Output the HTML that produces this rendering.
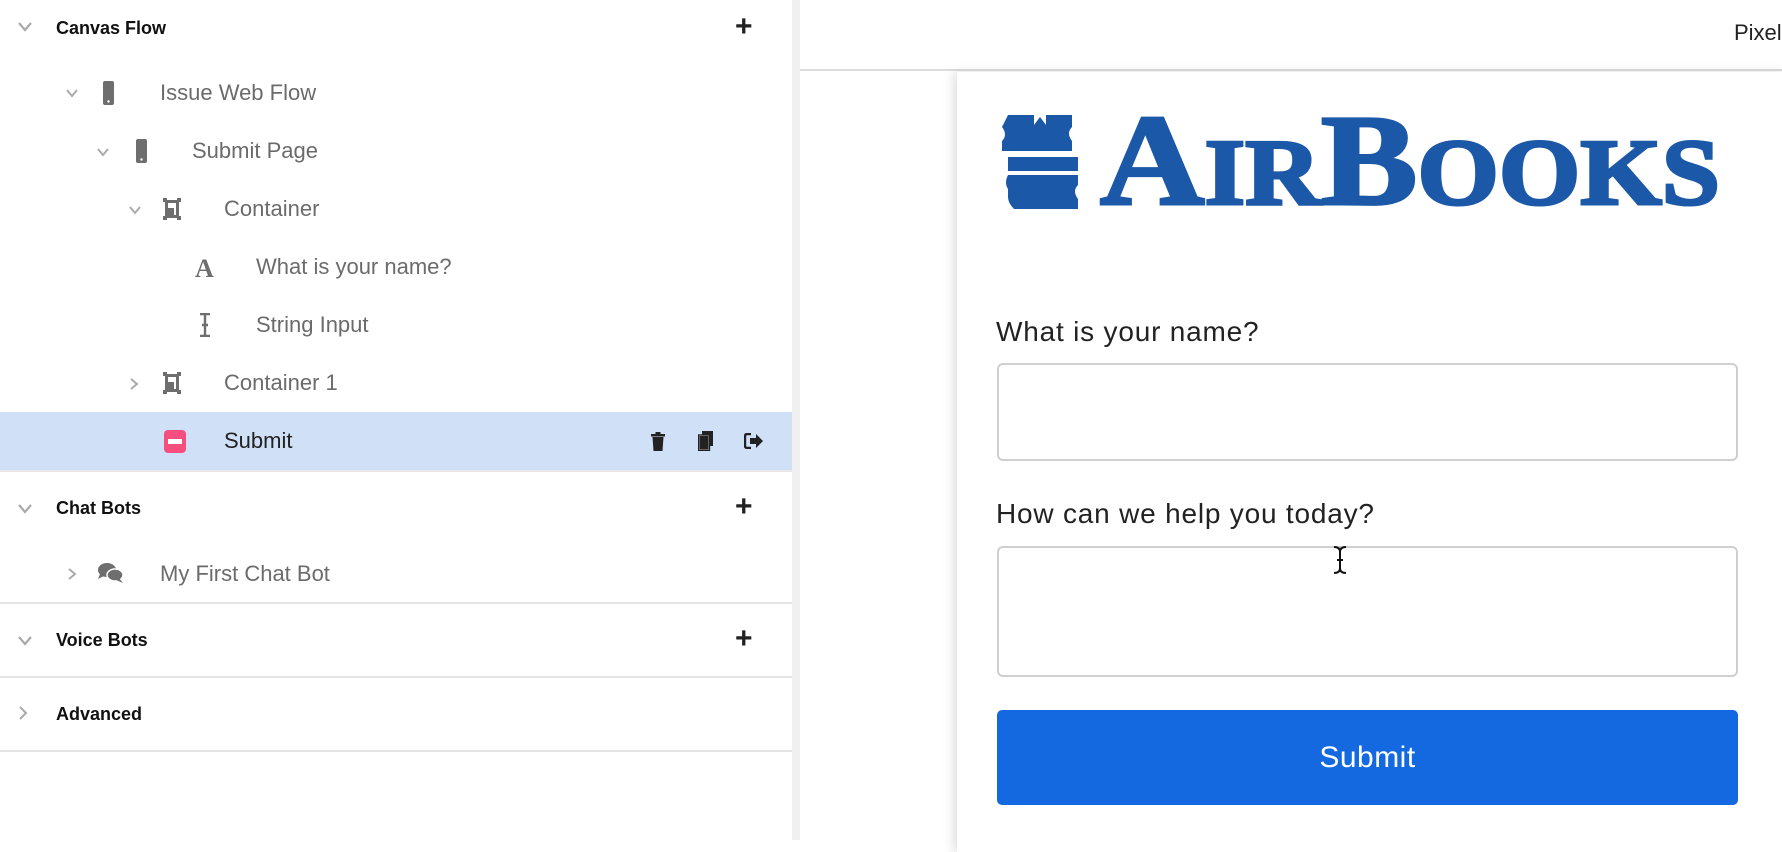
<!DOCTYPE html>
<html><head><meta charset="utf-8"><style>
*{box-sizing:border-box;margin:0;padding:0}
body{width:1782px;height:840px;overflow:hidden;background:#fff;font-family:"Liberation Sans",Arial,sans-serif;position:relative}
.side{position:absolute;left:0;top:0;width:792px;height:840px;background:#fff}
.div{position:absolute;left:792px;top:0;width:8px;height:840px;background:#f0f0f0}
.t{position:absolute;white-space:nowrap}
.h{font-size:18px;font-weight:bold;color:#111;left:56px}
.i{font-size:22px;color:#6b6b6b}
.plus{position:absolute;left:735px;font-size:30px;font-weight:bold;color:#222;line-height:1}
.line{position:absolute;left:0;width:792px;height:2px;background:#e4e4e4}
.right{position:absolute;left:800px;top:0;width:982px;height:840px;background:#fff}
.card{position:absolute;left:957px;top:72px;width:830px;height:780px;background:#fff;box-shadow:-4px 0 10px rgba(0,0,0,.12)}
.lab{position:absolute;left:996px;font-size:28px;color:#222;letter-spacing:.8px}
.inp{position:absolute;left:997px;width:741px;border:2px solid #cfcfcf;border-radius:6px;background:#fff}
</style></head><body>
<div class="side">
 <svg class="t" style="left:18px;top:22px" width="14" height="10"><path d="M1 1l6 7 6-7" stroke="#aaa" stroke-width="2.2" fill="none"/></svg>
 <div class="t h" style="top:18px">Canvas Flow</div>
 <div class="plus" style="top:12px">+</div>

 <svg class="t" style="left:66px;top:89px" width="12" height="9"><path d="M1 1l5 6 5-6" stroke="#aaa" stroke-width="2" fill="none"/></svg>
 <svg class="t" style="left:103px;top:81px" width="12" height="24"><rect x="0" y="0" width="11" height="24" rx="2" fill="#6e6e6e"/><circle cx="5.5" cy="20.5" r="1.2" fill="#fff"/></svg>
 <div class="t i" style="left:160px;top:80px">Issue Web Flow</div>

 <svg class="t" style="left:97px;top:148px" width="12" height="9"><path d="M1 1l5 6 5-6" stroke="#aaa" stroke-width="2" fill="none"/></svg>
 <svg class="t" style="left:136px;top:139px" width="12" height="24"><rect x="0" y="0" width="11" height="24" rx="2" fill="#6e6e6e"/><circle cx="5.5" cy="20.5" r="1.2" fill="#fff"/></svg>
 <div class="t i" style="left:192px;top:138px">Submit Page</div>

 <svg class="t" style="left:129px;top:206px" width="12" height="9"><path d="M1 1l5 6 5-6" stroke="#aaa" stroke-width="2" fill="none"/></svg>
 <svg class="t" style="left:163px;top:198px" width="18" height="22"><path d="M0 0h4v2h10v-2h4v4h-2v14h2v4h-4v-2h-10v2h-4v-4h2v-14h-2z" fill="#6e6e6e"/><rect x="5" y="5" width="8" height="12" fill="#fff"/><rect x="5" y="10" width="6" height="7" fill="#6e6e6e"/></svg>
 <div class="t i" style="left:224px;top:196px">Container</div>

 <div class="t" style="left:195px;top:254px;font-family:'Liberation Serif',serif;font-weight:bold;font-size:26px;color:#6e6e6e">A</div>
 <div class="t i" style="left:256px;top:254px">What is your name?</div>

 <svg class="t" style="left:199px;top:313px" width="12" height="24"><path d="M1 1h10M6 1v22M1 23h10M3 12h6" stroke="#6e6e6e" stroke-width="2.4" fill="none"/></svg>
 <div class="t i" style="left:256px;top:312px">String Input</div>

 <svg class="t" style="left:130px;top:378px" width="9" height="12"><path d="M1 1l6 5-6 5" stroke="#aaa" stroke-width="2" fill="none"/></svg>
 <svg class="t" style="left:163px;top:372px" width="18" height="22"><path d="M0 0h4v2h10v-2h4v4h-2v14h2v4h-4v-2h-10v2h-4v-4h2v-14h-2z" fill="#6e6e6e"/><rect x="5" y="5" width="8" height="12" fill="#fff"/><rect x="5" y="10" width="6" height="7" fill="#6e6e6e"/></svg>
 <div class="t i" style="left:224px;top:370px">Container 1</div>

 <div style="position:absolute;left:0;top:412px;width:792px;height:58px;background:#cfe0f7"></div>
 <div style="position:absolute;left:164px;top:430px;width:22px;height:23px;border-radius:4px;background:#f64e7f"></div>
 <div style="position:absolute;left:168px;top:439px;width:14px;height:5px;background:#fff"></div>
 <div class="t i" style="left:224px;top:428px;color:#222">Submit</div>
 <svg class="t" style="left:651px;top:432px" width="14" height="19"><rect x="0" y="2" width="14" height="2.5" fill="#222"/><rect x="4.5" y="0" width="5" height="3" fill="#222"/><path d="M1.5 5h11l-1 14h-9z" fill="#222"/></svg>
 <svg class="t" style="left:698px;top:431px" width="16" height="20"><rect x="4" y="0" width="11" height="15" fill="#222"/><rect x="0.5" y="4" width="11" height="15.5" fill="#fff" stroke="#222" stroke-width="1.4"/><rect x="1.5" y="5" width="9" height="13.5" fill="#222"/></svg>
 <svg class="t" style="left:744px;top:433px" width="20" height="16"><path d="M7 1h-4a2 2 0 0 0-2 2v10a2 2 0 0 0 2 2h4" stroke="#222" stroke-width="2.4" fill="none"/><path d="M6 5h6v-4l7 7-7 7v-4h-6z" fill="#222"/></svg>
 <div class="line" style="top:470px;background:#e8e8e8"></div>

 <svg class="t" style="left:18px;top:504px" width="14" height="10"><path d="M1 1l6 7 6-7" stroke="#aaa" stroke-width="2.2" fill="none"/></svg>
 <div class="t h" style="top:498px">Chat Bots</div>
 <div class="plus" style="top:492px">+</div>
 <svg class="t" style="left:68px;top:568px" width="9" height="12"><path d="M1 1l6 5-6 5" stroke="#aaa" stroke-width="2" fill="none"/></svg>
 <svg class="t" style="left:97px;top:562px" width="28" height="22"><ellipse cx="10" cy="8" rx="9" ry="7" fill="#6e6e6e"/><path d="M3 12l-2 5 6-3z" fill="#6e6e6e"/><ellipse cx="18" cy="13" rx="8" ry="6" fill="#6e6e6e" stroke="#fff" stroke-width="1.5"/><path d="M22 16l4 5-7-3z" fill="#6e6e6e"/></svg>
 <div class="t i" style="left:160px;top:561px">My First Chat Bot</div>
 <div class="line" style="top:602px"></div>

 <svg class="t" style="left:18px;top:636px" width="14" height="10"><path d="M1 1l6 7 6-7" stroke="#aaa" stroke-width="2.2" fill="none"/></svg>
 <div class="t h" style="top:630px">Voice Bots</div>
 <div class="plus" style="top:624px">+</div>
 <div class="line" style="top:676px"></div>

 <svg class="t" style="left:19px;top:706px" width="9" height="14"><path d="M1 1l6 6-6 6" stroke="#aaa" stroke-width="2" fill="none"/></svg>
 <div class="t h" style="top:704px">Advanced</div>
 <div class="line" style="top:750px"></div>
</div>
<div class="div"></div>
<div class="right">
 <div style="position:absolute;left:0;top:69px;width:982px;height:2px;background:#dcdcdc"></div>
 <div class="t" style="left:934px;top:20px;font-size:22px;color:#222">Pixel</div>
</div>
<div class="card"></div>
<svg style="position:absolute;left:1000px;top:105px" width="740" height="110">
 <path d="M8 10h26v10l6-8 6 8v-10h26v12q-6 6 0 14v10h-70v-10q6-6 0-14z" fill="#1c58a8"/>
 <path d="M8 52h70v14h-70z M8 70h70v10q-6 6 0 14v10h-64q-6-6-6-12v-8q-4-6 0-14z" fill="#1c58a8"/>
 <text x="100" y="99" font-family="Liberation Serif,serif" font-weight="bold" font-size="130" fill="#1c58a8" stroke="#1c58a8" stroke-width="3" textLength="620" lengthAdjust="spacingAndGlyphs">A<tspan font-size="94">IR</tspan>B<tspan font-size="94">OOKS</tspan></text>
</svg>
<div class="lab" style="top:316px">What is your name?</div>
<div class="inp" style="top:363px;height:98px"></div>
<div class="lab" style="top:498px">How can we help you today?</div>
<div class="inp" style="top:546px;height:131px"></div>
<svg style="position:absolute;left:1332px;top:545px" width="16" height="30"><path d="M2 2q6 0 6 5v16q0 5-6 5M14 2q-6 0-6 5v16q0 5 6 5M5 15h6" stroke="#111" stroke-width="2" fill="none"/></svg>
<div style="position:absolute;left:997px;top:710px;width:741px;height:95px;background:#1469e0;border-radius:5px;color:#fff;font-size:30px;text-align:center;line-height:95px;letter-spacing:.5px">Submit</div>
</body></html>
